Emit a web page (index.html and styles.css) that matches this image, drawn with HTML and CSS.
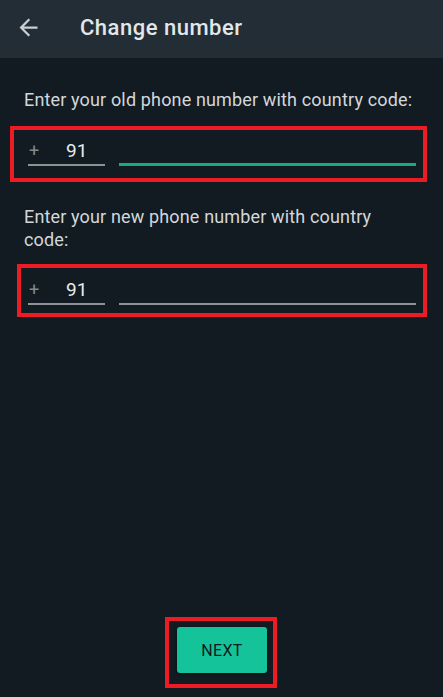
FILE: index.html
```html
<!DOCTYPE html>
<html lang="en">
<head>
<meta charset="utf-8">
<title>Change number</title>
<link rel="stylesheet" href="styles.css">
</head>
<body>
<div class="screen">
  <header class="appbar">
    <svg class="back" viewBox="0 0 24 24" aria-hidden="true"><path d="M20 11H7.83l5.59-5.59L12 4l-8 8 8 8 1.41-1.41L7.83 13H20v-2z"/></svg>
    <h1 class="title">Change number</h1>
  </header>
  <main class="content">
    <p class="label">Enter your old phone number with country code:</p>
    <div class="field-row row-old">
      <span class="mark mark-old"></span>
      <div class="cc"><span class="plus">+</span><span class="code">91</span></div>
      <div class="phone phone-active"></div>
    </div>
    <p class="label label-new">Enter your new phone number with country<br>code:</p>
    <div class="field-row row-new">
      <span class="mark mark-new"></span>
      <div class="cc"><span class="plus">+</span><span class="code">91</span></div>
      <div class="phone"></div>
    </div>
  </main>
  <footer class="actions">
    <div class="btn-wrap">
      <span class="mark mark-btn"></span>
      <button class="next">NEXT</button>
    </div>
  </footer>
</div>
</body>
</html>
```
FILE: styles.css
```css
html, body {
  margin: 0;
  padding: 0;
  background: #121b22;
}
.screen {
  width: 443px;
  height: 697px;
  display: flex;
  flex-direction: column;
  font-family: Roboto, "Noto Sans", "Liberation Sans", sans-serif;
  background: #121b22;
  overflow: hidden;
}
.appbar {
  height: 58px;
  box-sizing: border-box;
  padding-bottom: 4px;
  background: #222d35;
  display: flex;
  align-items: center;
  flex: none;
}
.back {
  width: 27px;
  height: 27px;
  margin-left: 15px;
  fill: #c9ced1;
  flex: none;
}
.title {
  margin: 0 0 0 38px;
  font-size: 22px;
  font-weight: 500;
  color: #e4e7e9;
  letter-spacing: 0.5px;
}
.content {
  flex: 1;
  padding-top: 30px;
}
.label {
  margin: 0 0 0 24px;
  font-size: 18px;
  line-height: 23px;
  letter-spacing: 0.15px;
  color: #d3d7da;
}
.label-new {
  margin-top: 39px;
}
.field-row {
  position: relative;
  display: flex;
  gap: 14px;
  margin: 24px 27px 0 28px;
}
.row-old {
  margin-top: 25px;
}
.cc {
  width: 77px;
  height: 28px;
  border-bottom: 2px solid #8b9397;
  display: flex;
  align-items: center;
  flex: none;
}
.plus {
  font-size: 18px;
  color: #7f8b91;
  width: 37px;
  padding-left: 1px;
}
.code {
  font-size: 19px;
  color: #e8eaeb;
}
.phone {
  flex: 1;
  height: 28px;
  border-bottom: 2px solid #8b9397;
}
.phone-active {
  height: 27px;
  border-bottom: 3px solid #1aa887;
}
.mark {
  position: absolute;
  border: 4px solid #ed1c24;
  pointer-events: none;
}
.mark-old {
  left: -18px;
  right: -11px;
  top: -10px;
  bottom: -16px;
}
.mark-new {
  left: -11px;
  right: -11px;
  top: -11px;
  bottom: -12px;
}
.actions {
  flex: none;
  display: flex;
  justify-content: center;
  padding-bottom: 24px;
}
.btn-wrap {
  position: relative;
  margin-left: 1px;
}
.mark-btn {
  left: -12px;
  right: -10px;
  top: -10px;
  bottom: -15px;
}
.next {
  display: block;
  width: 90px;
  height: 46px;
  border: none;
  border-radius: 3px;
  background: #15c39b;
  color: #0f1b20;
  font-family: Roboto, "Noto Sans", "Liberation Sans", sans-serif;
  font-size: 16px;
  font-weight: 400;
  letter-spacing: 0.3px;
  box-shadow: 0 1px 3px rgba(0, 0, 0, 0.6);
}
```
